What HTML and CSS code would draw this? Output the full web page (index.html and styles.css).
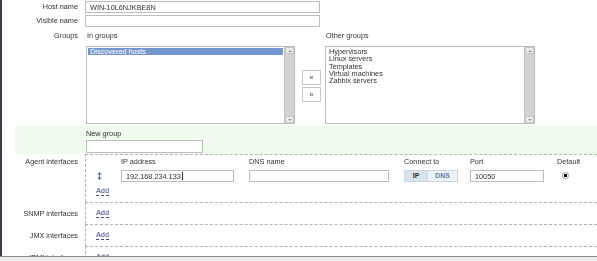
FILE: index.html
```html
<!DOCTYPE html>
<html lang="en">
<head>
  <meta charset="UTF-8">
  <meta name="viewport" content="width=device-width, initial-scale=1.0">
  <link rel="stylesheet" href="styles.css">
</head>
<body>
  <div class="page">
    <!-- Host name / visible name -->
    <div class="row row-field">
      <div class="lbl">Host name</div>
      <div class="cell"><input class="text wide" type="text" value="WIN-10L6NJKBE8N"></div>
    </div>
    <div class="row row-field">
      <div class="lbl">Visible name</div>
      <div class="cell"><input class="text wide" type="text" value=""></div>
    </div>

    <!-- Groups -->
    <div class="row row-groups">
      <div class="lbl">Groups</div>
      <div class="groups">
        <div class="cap">In groups</div>
        <div></div>
        <div class="cap">Other groups</div>
        <div class="listbox">
          <ul class="items">
            <li class="sel">Discovered hosts</li>
          </ul>
          <div class="vscroll"><span class="arr up"></span><span class="arr down"></span></div>
        </div>
        <div class="move-btns">
          <button class="move">&laquo;</button>
          <button class="move">&raquo;</button>
        </div>
        <div class="listbox">
          <ul class="items plain">
            <li>Hypervisors</li>
            <li>Linux servers</li>
            <li>Templates</li>
            <li>Virtual machines</li>
            <li>Zabbix servers</li>
          </ul>
          <div class="vscroll"><span class="arr up"></span><span class="arr down"></span></div>
        </div>
      </div>
    </div>

    <!-- New group -->
    <div class="row row-new">
      <div class="lbl"></div>
      <div class="cell">
        <div class="cap">New group</div>
        <input class="text newgroup" type="text" value="">
      </div>
    </div>

    <!-- Interfaces -->
    <div class="row row-iface row-agent">
      <div class="lbl">Agent interfaces</div>
      <div class="iface-box">
        <div class="iface-head">
          <span class="c-handle"></span>
          <span class="c-ip cap">IP address</span>
          <span class="c-dns cap">DNS name</span>
          <span class="c-conn cap">Connect to</span>
          <span class="c-port cap">Port</span>
          <span class="c-def cap">Default</span>
        </div>
        <div class="iface-line">
          <span class="c-handle handle">
            <svg class="drag" width="5" height="8" viewBox="0 0 5 8"><path d="M2.5 0 L5 2.6 H0 Z M2.5 8 L0 5.4 H5 Z" fill="#4d6f9e"/><rect x="2" y="2.4" width="1" height="3.2" fill="#4d6f9e"/></svg>
          </span>
          <span class="c-ip ip-cell"><input class="text ip" type="text" value="192.168.234.133"><span class="caret"></span></span>
          <span class="c-dns"><input class="text dns" type="text" value=""></span>
          <span class="c-conn seg"><span class="seg-on">IP</span><span class="seg-off">DNS</span></span>
          <span class="c-port"><input class="text port" type="text" value="10050"></span>
          <span class="c-def"><span class="radio"></span></span>
        </div>
        <a class="add" href="#">Add</a>
      </div>
    </div>
    <div class="row row-iface">
      <div class="lbl">SNMP interfaces</div>
      <div class="iface-box simple"><a class="add" href="#">Add</a></div>
    </div>
    <div class="row row-iface">
      <div class="lbl">JMX interfaces</div>
      <div class="iface-box simple"><a class="add" href="#">Add</a></div>
    </div>
    <div class="row row-iface">
      <div class="lbl">IPMI interfaces</div>
      <div class="iface-box simple"><a class="add" href="#">Add</a></div>
    </div>
  </div>

  <!-- status strip overlaying the bottom edge -->
  <div class="status-bar"></div>
</body>
</html>
```

FILE: styles.css
```css
/* Basic layout */
html, body {
  margin: 0;
  padding: 0;
  height: 100%;
  overflow: hidden;
  background: #fff;
}
body {
  font-family: "Liberation Sans", Arial, sans-serif;
  font-size: 7.3px;
  color: #2a2a2a;
}
.page {
  border-left: 2px solid #34404f;
  min-height: 100vh;
  padding-top: 1px;
  box-sizing: border-box;
}

/* Form rows: label column + content column */
.row {
  display: grid;
  grid-template-columns: 76px 1fr;
  column-gap: 7px;
}
.lbl {
  text-align: right;
  line-height: 8px;
  color: #333;
}
.row-field {
  align-items: center;
  margin-bottom: 2px;
}
.cap {
  line-height: 8px;
  color: #333;
}
/* keep tiny text grey instead of colour-fringed */
.lbl, .cap, .items.plain, .move, .text {
  filter: grayscale(1);
}

/* Inputs */
.text {
  box-sizing: border-box;
  height: 12px;
  border: 1px solid #bdbdbd;
  padding: 0 0 0 4px;
  margin: 0;
  font-family: "Liberation Sans", Arial, sans-serif;
  font-size: 7.3px;
  color: #333;
  background: #fff;
  outline: none;
  display: block;
}
.wide { width: 235px; }
.ip { width: 113px; }
.dns { width: 140px; }
.port { width: 74px; }
.newgroup { width: 117px; height: 13px; margin-top: 2px; }
.ip-cell { position: relative; }
.caret {
  position: absolute;
  left: 61px;
  top: 2px;
  width: 1px;
  height: 8px;
  background: #333;
}

/* Groups */
.row-groups {
  margin-top: 5px;
}
.groups {
  display: grid;
  grid-template-columns: 209px 30px 210px;
  grid-template-rows: 8px 78px;
  row-gap: 6px;
  padding-left: 1px;
}
.groups .cap { padding-left: 1px; }
.listbox {
  box-sizing: border-box;
  border: 1px solid #bdbdbd;
  display: flex;
  background: #fff;
}
.items {
  list-style: none;
  margin: 0;
  padding: 1px 1px 0 3px;
  flex: 1;
  line-height: 7.3px;
  color: #333;
}
.items li.sel {
  background: #7397d0;
  color: #fff;
  margin-left: -2px;
  padding-left: 2px;
}
.vscroll {
  width: 9px;
  background: #d3d3d3;
  border-left: 1px solid #c4c4c4;
  display: flex;
  flex-direction: column;
  justify-content: space-between;
}
.arr {
  height: 7px;
  background: #ececec;
  border: 1px solid #c9c9c9;
  box-sizing: border-box;
  position: relative;
}
.arr::after {
  content: "";
  position: absolute;
  left: 2px;
  top: 2px;
  border-left: 2px solid transparent;
  border-right: 2px solid transparent;
}
.arr.up::after { border-bottom: 2px solid #9a9a9a; }
.arr.down::after { border-top: 2px solid #9a9a9a; }
.move-btns {
  display: flex;
  flex-direction: column;
  justify-content: center;
  gap: 2px;
  padding-left: 7px;
  padding-top: 2px;
}
.move {
  width: 19px;
  height: 15px;
  padding: 0;
  border: 1px solid #c8c8c8;
  background: #fff;
  font-family: "Liberation Sans", Arial, sans-serif;
  font-size: 7px;
  color: #333;
}

/* New group band */
.row-new {
  margin-top: 2px;
  margin-left: 13px;
  grid-template-columns: 63px 1fr;
  background: #effbed;
  padding: 4px 0 1px;
}
.row-new .cell { padding-left: 1px; }

/* Interfaces */
.iface-box {
  border-top: 1px dashed #b4b4b4;
  border-left: 1px dashed #b4b4b4;
}
.row-agent .iface-box { height: 47px; }
.row-agent .lbl { padding-top: 4px; }
.iface-head,
.iface-line {
  display: flex;
}
.iface-head { padding-top: 3px; height: 8px; }
.iface-line { margin-top: 4px; height: 12px; }
.c-handle { width: 35px; flex: none; }
.c-ip { width: 128px; flex: none; }
.c-dns { width: 155px; flex: none; }
.c-conn { width: 66px; flex: none; }
.c-port { width: 87px; flex: none; }
.c-def { flex: 1; }
.handle {
  display: flex;
  align-items: center;
  padding-left: 11px;
  box-sizing: border-box;
}
.drag { display: block; }
.seg {
  display: flex;
  box-sizing: border-box;
  font-weight: bold;
  font-size: 6.8px;
  line-height: 10px;
}
.seg-on,
.seg-off {
  border: 1px solid #c9d5e2;
  text-align: center;
}
.seg-on {
  width: 22px;
  background: #d9e3ee;
  color: #2a2a2a;
}
.seg-off {
  width: 29px;
  border-left: none;
  background: #eef3f9;
  color: #5b7ca4;
}
.radio {
  display: block;
  width: 7px;
  height: 7px;
  box-sizing: border-box;
  margin: 2px 0 0 5px;
  border-radius: 50%;
  border: 1px solid #9a9a9a;
  background: radial-gradient(circle, #111 0 1.6px, #fff 2px);
}
.add {
  display: inline-block;
  margin: 5px 0 0 10px;
  line-height: 8px;
  color: #3a4b8c;
  text-decoration: none;
  border-bottom: 1px dashed #3a4b8c;
}
.row-iface .simple {
  height: 21px;
  display: flex;
  align-items: center;
}
.row-iface .simple .add { margin-top: 0; }
.row-iface:not(.row-agent) .lbl {
  display: flex;
  align-items: center;
  justify-content: flex-end;
  border-top: 1px solid transparent;
}

/* Bottom status strip */
.status-bar {
  position: fixed;
  left: 0;
  right: 0;
  bottom: 0;
  height: 4px;
  border-top: 1px solid #8c8c8c;
  background: #ececec;
}
```
